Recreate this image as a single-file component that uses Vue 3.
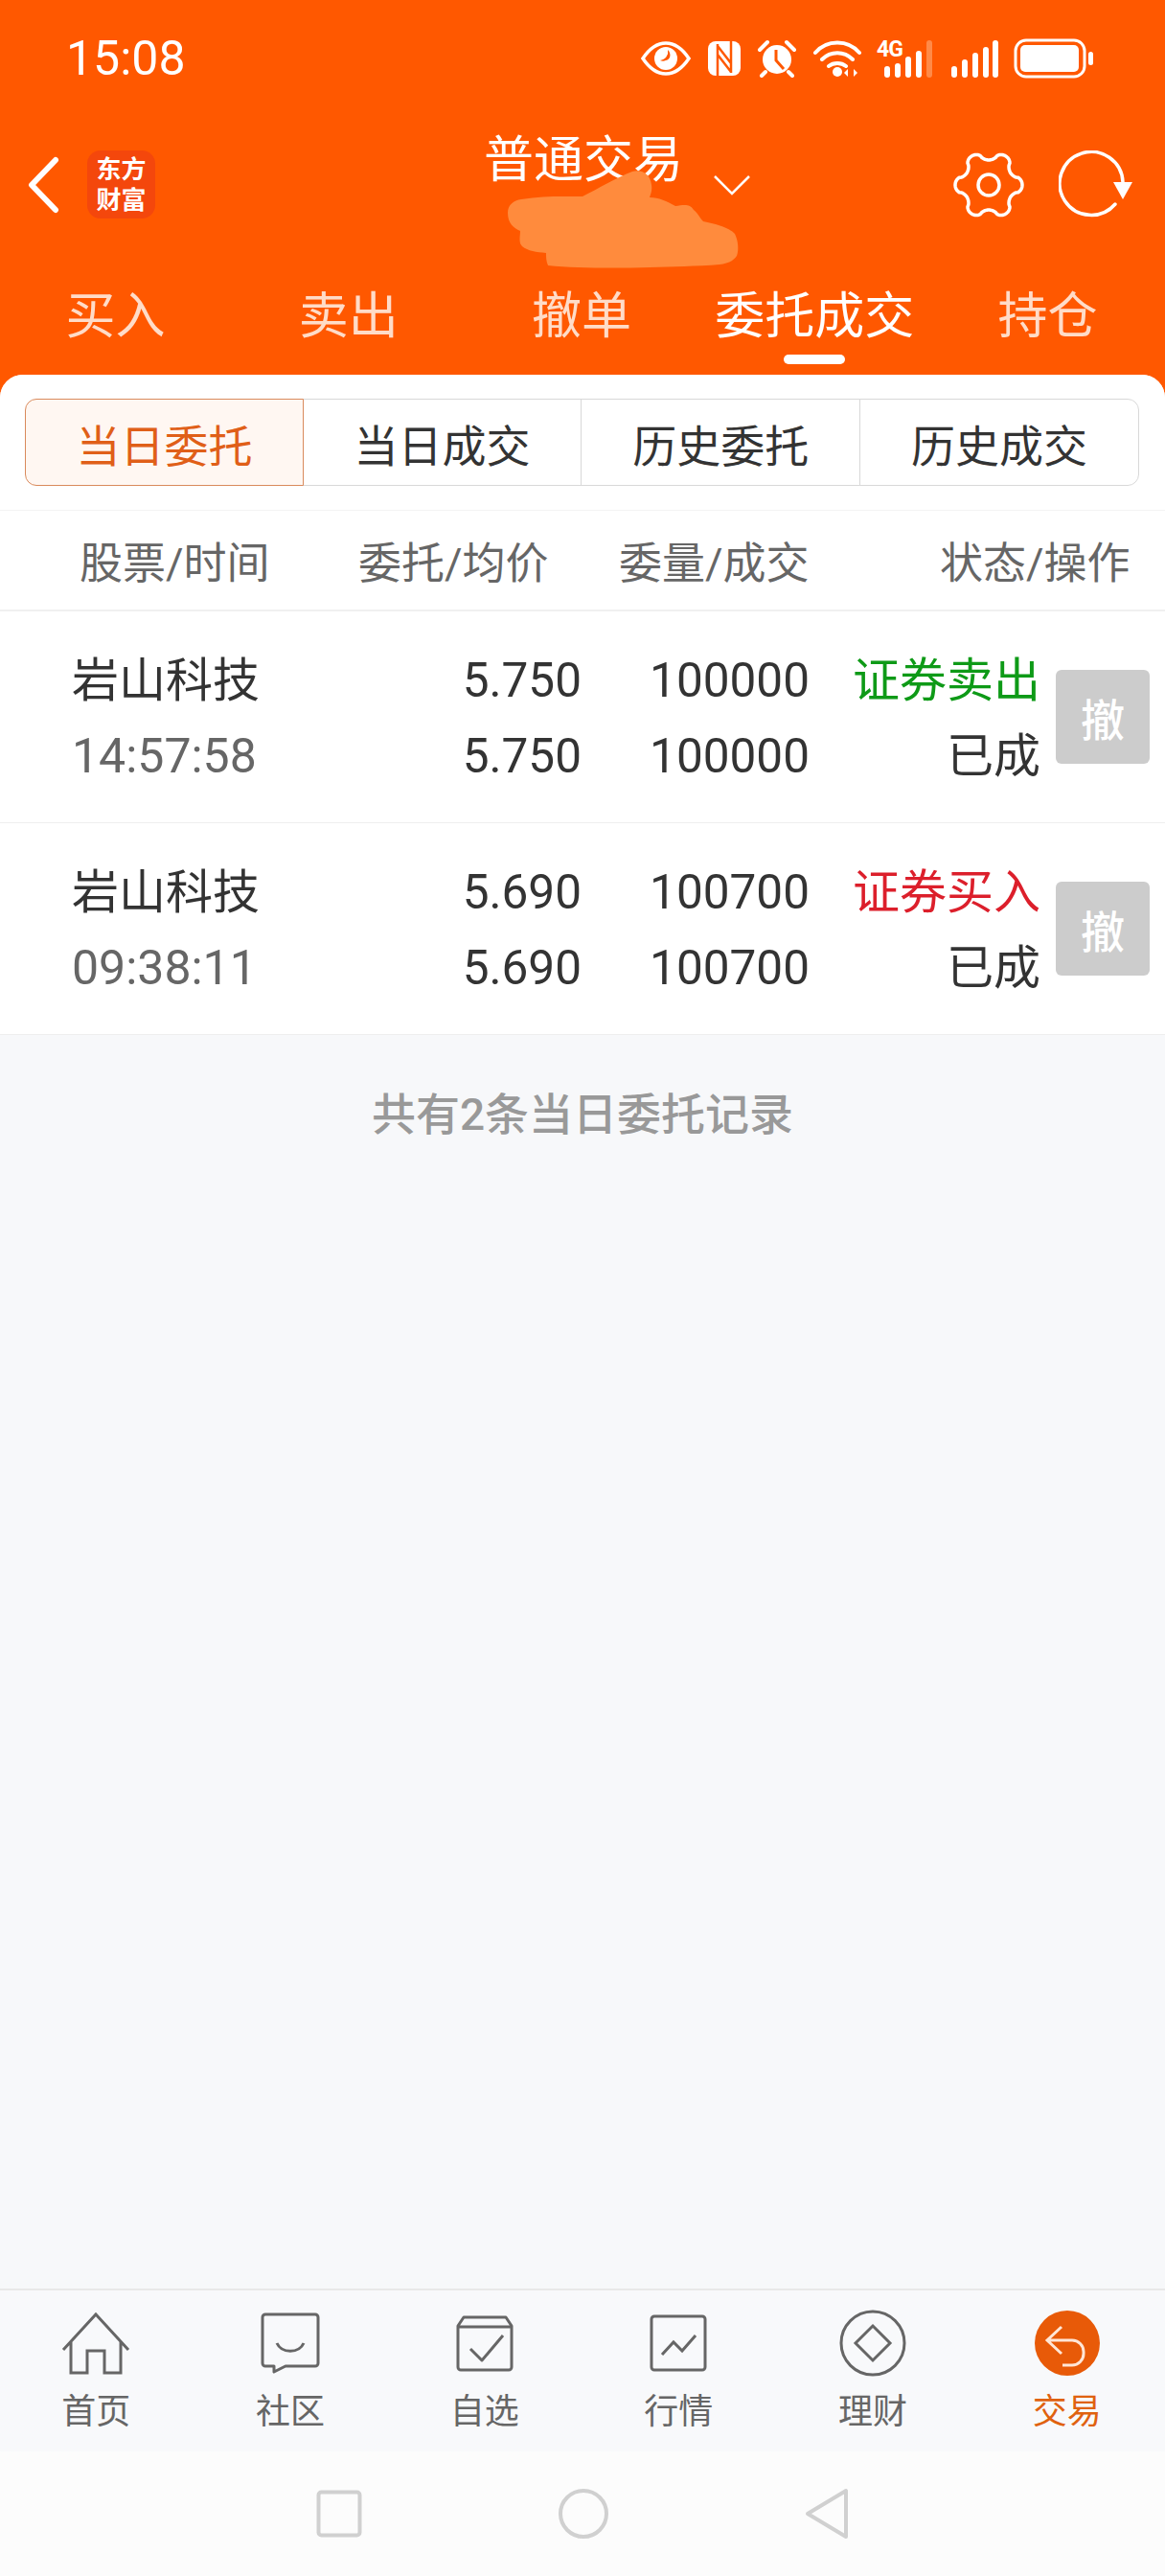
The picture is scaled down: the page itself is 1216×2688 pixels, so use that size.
<template>
  <div class="page">
    <header class="top">
      <div class="status">
        <span class="clock">15:08</span>
        <div class="status-icons">
          <svg width="52" height="36" viewBox="0 0 52 36">
            <path d="M2 18C10 6 18 2 26 2s16 4 24 16c-8 12-16 16-24 16S10 30 2 18z" fill="none" stroke="#fff" stroke-width="3.5" />
            <circle cx="26" cy="18" r="12" fill="#fff" />
            <path d="M28 9a9 9 0 0 1-8 11c2 1 4 1 6 0 5-1 6-7 2-11z" fill="#ff5800" />
          </svg>
          <svg width="36" height="38" viewBox="0 0 36 38">
            <rect x="1" y="1" width="34" height="36" rx="8" fill="#fff" />
            <path d="M11 4v34M25 0v34M11 6l14 18M11 15l14 18" stroke="#ff5800" stroke-width="2.5" fill="none" />
          </svg>
          <svg width="42" height="40" viewBox="0 0 42 40">
            <circle cx="21" cy="21" r="15" fill="#fff" />
            <path d="M20 11v11l8 9" stroke="#ff5800" stroke-width="3" fill="none" />
            <path d="M3 11l8-8M39 11l-8-8M9 34l-4 4M33 34l4 4" stroke="#fff" stroke-width="4" stroke-linecap="round" />
          </svg>
          <svg width="50" height="40" viewBox="0 0 50 40">
            <path d="M2 14C14 0 36 0 48 14M9 21c9-9 23-9 32 0M16 28c5-4 13-4 18 0" stroke="#fff" stroke-width="4" fill="none" stroke-linecap="round" />
            <circle cx="25" cy="34" r="5" fill="#fff" />
            <path d="M36 39v-8l-4 4zM42 31v8l4-4z" fill="#fff" />
          </svg>
          <div class="net">
            <span class="net-label">4G</span>
            <svg width="60" height="40" viewBox="0 0 60 40">
              <rect x="8" y="28" width="6" height="12" rx="3" fill="#fff" />
              <rect x="19" y="25" width="6" height="15" rx="3" fill="#fff" />
              <rect x="30" y="18" width="6" height="22" rx="3" fill="#fff" />
              <rect x="41" y="12" width="6" height="28" rx="3" fill="#fff" />
              <rect x="52" y="1" width="6" height="39" rx="3" fill="#ff8a48" />
            </svg>
          </div>
          <svg width="50" height="40" viewBox="0 0 50 40">
            <rect x="1" y="28" width="6" height="12" rx="3" fill="#fff" />
            <rect x="12" y="21" width="6" height="19" rx="3" fill="#fff" />
            <rect x="23" y="14" width="6" height="26" rx="3" fill="#fff" />
            <rect x="34" y="8" width="6" height="32" rx="3" fill="#fff" />
            <rect x="44" y="1" width="6" height="39" rx="3" fill="#fff" />
          </svg>
          <svg width="84" height="42" viewBox="0 0 84 42">
            <rect x="2" y="2" width="72" height="38" rx="11" fill="none" stroke="#fff" stroke-width="3" />
            <rect x="7" y="7" width="61" height="28" rx="5" fill="#fff" />
            <rect x="78" y="14" width="5" height="14" rx="2.5" fill="#fff" />
          </svg>
        </div>
      </div>

      <div class="toolbar">
        <svg class="back" width="34" height="60" viewBox="0 0 34 60">
          <path d="M30 4L5 30l25 26" fill="none" stroke="#fff" stroke-width="6" stroke-linecap="round" stroke-linejoin="round" />
        </svg>
        <div class="logo">东方<br />财富</div>
        <div class="title">普通交易</div>
        <svg class="caret" width="40" height="22" viewBox="0 0 40 22">
          <path d="M2 2l18 18L38 2" fill="none" stroke="#fff" stroke-width="2.5" />
        </svg>
        <svg class="gear" width="76" height="72" viewBox="0 0 76 72">
          <path :d="gearPath" fill="none" stroke="#fff" stroke-width="3.5" stroke-linejoin="round" />
          <circle cx="38" cy="36" r="11" fill="none" stroke="#fff" stroke-width="3.5" />
        </svg>
        <svg class="refresh" width="78" height="72" viewBox="0 0 78 72">
          <path d="M67 33A33 33 0 1 0 59 56" fill="none" stroke="#fff" stroke-width="3.5" stroke-linecap="round" />
          <path d="M57 33h20l-10 18z" fill="#fff" />
        </svg>
      </div>

      <nav class="tabs">
        <div v-for="t in tabs" :key="t" class="tab" :class="{ on: t === '委托成交' }">
          <span>{{ t }}</span>
          <i v-if="t === '委托成交'"></i>
        </div>
      </nav>

      <!-- hand-drawn smudge over the account name -->
      <svg class="smudge" width="260" height="115" viewBox="520 170 260 115">
        <path
          fill="#ff8b3d"
          d="M530 222c0-8 6-13 14-14 24-4 44-3 64-3 16-8 36-20 52-26 10-3 19 3 20 14 1 6-1 10-2 13 10 0 18 4 27 9 8-1 15-3 19 4 5 4 6 8 10 12 14 3 26 6 33 13 4 8 4 18 2 23-4 6-10 8-18 9-24 2-50 2-73 3-34 1-76 1-106-2-2-4-2-9-2-13-10-1-19-2-25-7-4-4-2-11-2-16-7-3-13-8-13-19z"
        />
      </svg>
    </header>

    <main class="panel">
      <div class="card">
        <div class="seg-wrap">
          <div class="seg">
            <div v-for="(s, i) in segments" :key="s" class="seg-item" :class="{ on: i === 0 }">{{ s }}</div>
          </div>
        </div>

        <div class="thead">
          <span class="h1">股票/时间</span>
          <span class="h2">委托/均价</span>
          <span class="h3">委量/成交</span>
          <span>状态/操作</span>
        </div>

        <div v-for="o in orders" :key="o.time" class="row">
          <div class="cell">
            <div>{{ o.name }}</div>
            <div class="time">{{ o.time }}</div>
          </div>
          <div class="cell num">
            <div>{{ o.price }}</div>
            <div>{{ o.avg }}</div>
          </div>
          <div class="cell num">
            <div>{{ o.qty }}</div>
            <div>{{ o.done }}</div>
          </div>
          <div class="cell state">
            <div :class="o.side">{{ o.type }}</div>
            <div>已成</div>
          </div>
          <button class="cancel">撤</button>
        </div>

        <div class="empty">共有2条当日委托记录</div>
      </div>
    </main>

    <footer class="bar">
      <div v-for="b in bar" :key="b.label" class="bar-item" :class="{ on: b.label === '交易' }">
        <div class="bar-icon">
          <svg v-if="b.label === '首页'" width="72" height="66" viewBox="0 0 72 66" fill="none" stroke="#666" stroke-width="3">
            <path d="M2 40L36 3l34 37M10 32v32h17V41h18v23h17V32" />
          </svg>
          <svg v-else-if="b.label === '社区'" width="62" height="64" viewBox="0 0 62 64" fill="none" stroke="#666" stroke-width="3" stroke-linejoin="round">
            <path d="M5 2h52a3 3 0 0 1 3 3v48a3 3 0 0 1-3 3H26l-12 6v-6H5a3 3 0 0 1-3-3V5a3 3 0 0 1 3-3z" />
            <path d="M17 32c5 11 23 11 28 0" />
          </svg>
          <svg v-else-if="b.label === '自选'" width="60" height="60" viewBox="0 0 60 60" fill="none" stroke="#666" stroke-width="3" stroke-linejoin="round">
            <path d="M2 12l6-9h44l6 9v43a3 3 0 0 1-3 3H5a3 3 0 0 1-3-3zM2 13h56" />
            <path d="M15 36l12 12 22-26" />
          </svg>
          <svg v-else-if="b.label === '行情'" width="60" height="60" viewBox="0 0 60 60" fill="none" stroke="#666" stroke-width="3">
            <rect x="2" y="2" width="56" height="56" rx="3" />
            <path d="M13 42l12-13 9 9 14-16" />
          </svg>
          <svg v-else-if="b.label === '理财'" width="70" height="70" viewBox="0 0 70 70" fill="none" stroke="#666" stroke-width="3">
            <circle cx="35" cy="35" r="33" />
            <path d="M35 17l18 18-18 18-18-18z" />
          </svg>
          <svg v-else width="70" height="70" viewBox="0 0 70 70" fill="none">
            <circle cx="35" cy="35" r="34" fill="#e85a08" />
            <path d="M29 18L14 32l15 14M14 32h26a12 12 0 0 1 12 12v2a12 12 0 0 1-12 12H30" stroke="#ffe6d6" stroke-width="3" />
          </svg>
        </div>
        <span>{{ b.label }}</span>
      </div>
    </footer>

    <div class="sysnav">
      <svg width="48" height="50" viewBox="0 0 48 50"><rect x="2.5" y="2.5" width="43" height="45" rx="3" fill="none" stroke="#d0d0d0" stroke-width="4" /></svg>
      <svg width="54" height="54" viewBox="0 0 54 54"><circle cx="27" cy="27" r="24" fill="none" stroke="#d0d0d0" stroke-width="4" /></svg>
      <svg width="46" height="54" viewBox="0 0 46 54"><path d="M3 27L43 3v48z" fill="none" stroke="#d0d0d0" stroke-width="4" stroke-linejoin="round" /></svg>
    </div>
  </div>
</template>

<script setup>
const tabs = ['买入', '卖出', '撤单', '委托成交', '持仓']
const segments = ['当日委托', '当日成交', '历史委托', '历史成交']

const orders = [
  { name: '岩山科技', time: '14:57:58', price: '5.750', avg: '5.750', qty: '100000', done: '100000', type: '证券卖出', side: 'sell' },
  { name: '岩山科技', time: '09:38:11', price: '5.690', avg: '5.690', qty: '100700', done: '100700', type: '证券买入', side: 'buy' }
]

const bar = [
  { label: '首页' },
  { label: '社区' },
  { label: '自选' },
  { label: '行情' },
  { label: '理财' },
  { label: '交易' }
]

// six-lobed outline for the settings gear
function makeGear() {
  const pts = []
  for (let i = 0; i < 180; i++) {
    const a = (i / 180) * Math.PI * 2
    const f = Math.cos(6 * a)
    const r = 30.5 + 4.5 * Math.sign(f) * Math.pow(Math.abs(f), 0.6)
    pts.push((38 + r * Math.cos(a)).toFixed(1) + ' ' + (36 + r * Math.sin(a)).toFixed(1))
  }
  return 'M' + pts.join('L') + 'z'
}

const gearPath = makeGear()
</script>

<style scoped>
.page {
  display: flex;
  flex-direction: column;
  height: 100vh;
  font-family: Roboto, "Noto Sans CJK SC", sans-serif;
  color: #333;
  background: #f7f8fa;
}

.top {
  position: relative;
  background: #ff5800;
  color: #fff;
}

.status {
  display: flex;
  align-items: center;
  justify-content: space-between;
  height: 122px;
  padding: 0 74px 0 69px;
}

.clock {
  font-size: 50px;
}

.status-icons {
  display: flex;
  align-items: center;
  gap: 16.5px;
}

.net {
  position: relative;
  width: 60px;
  height: 40px;
}

.net-label {
  position: absolute;
  left: 0;
  top: -1px;
  font-size: 23px;
  line-height: 23px;
  font-weight: 700;
  letter-spacing: -1px;
}

.net svg {
  display: block;
}

.toolbar {
  display: flex;
  align-items: flex-start;
  height: 130px;
  padding-left: 28px;
}

.back {
  margin-top: 41px;
}

.logo {
  width: 71px;
  height: 71px;
  margin: 35px 0 0 29px;
  background: #f4470c;
  border-radius: 14px;
  font-size: 26px;
  font-weight: 700;
  line-height: 32px;
  text-align: center;
  padding-top: 4px;
  box-sizing: border-box;
}

.title {
  margin: 21px 0 0 343px;
  font-size: 52px;
  line-height: 50px;
}

.caret {
  margin: 60px 0 0 31px;
}

.gear {
  margin: 35px 0 0 210px;
}

.refresh {
  margin: 35px 0 0 35px;
}

.tabs {
  display: grid;
  grid-template-columns: repeat(5, 1fr);
  height: 139px;
  box-sizing: border-box;
  padding-top: 54px;
}

.tab {
  display: flex;
  flex-direction: column;
  align-items: center;
  font-size: 52px;
  line-height: 50px;
  color: #ffdcc8;
  transform: translateX(-1px);
}

.tab.on {
  color: #fff;
}

.tab i {
  display: block;
  width: 64px;
  height: 10px;
  margin-top: 14px;
  border-radius: 5px;
  background: #fff;
}

.smudge {
  position: absolute;
  left: 520px;
  top: 170px;
}

.panel {
  flex: 1;
  display: flex;
  background: #ff5800;
}

.card {
  flex: 1;
  display: flex;
  flex-direction: column;
  border-radius: 24px 24px 0 0;
  background: #f7f8fa;
  overflow: hidden;
}

.seg-wrap {
  height: 142px;
  padding: 25px 27px 0 26px;
  box-sizing: border-box;
  background: #fff;
  border-bottom: 1px solid #f4f4f4;
}

.seg {
  display: grid;
  grid-template-columns: repeat(4, 1fr);
  height: 91px;
  box-sizing: border-box;
}

.seg-item {
  display: flex;
  align-items: center;
  justify-content: center;
  margin-left: -1.5px;
  border: 1.5px solid #d8d8d8;
  font-size: 46px;
  color: #333;
  background: #fff;
}

.seg-item:first-child {
  margin-left: 0;
  border-color: #d98a5c;
  border-radius: 12px 0 0 12px;
  color: #e05f18;
  background: #fff7f2;
  position: relative;
  z-index: 1;
}

.seg-item:last-child {
  border-radius: 0 12px 12px 0;
}

.thead {
  display: flex;
  align-items: center;
  height: 105px;
  padding-left: 83px;
  font-size: 45px;
  color: #666;
  background: #fff;
  border-bottom: 2px solid #f0f0f0;
  box-sizing: border-box;
}

.h1 {
  width: 291px;
}

.h2 {
  width: 272px;
}

.h3 {
  width: 335px;
}

.row {
  display: grid;
  grid-template-columns: 300px 232px 238px 241px 98px;
  align-items: center;
  height: 221px;
  padding-left: 75px;
  box-sizing: border-box;
  background: #fff;
  font-size: 49px;
  line-height: 79px;
  border-bottom: 1px solid #eee;
}

.row:last-of-type {
  border-bottom: none;
}

.cell {
  padding-top: 4px;
}

.time {
  color: #666;
  font-size: 50px;
}

.num {
  text-align: right;
  font-size: 49.5px;
}

.state {
  text-align: right;
}

.sell {
  color: #0e9a17;
}

.buy {
  color: #dc1f2b;
}

.cancel {
  width: 98px;
  height: 98px;
  margin-left: 16px;
  padding: 0;
  border: none;
  border-radius: 6px;
  background: #ccc;
  color: #fff;
  font-family: inherit;
  font-size: 46px;
  font-weight: 500;
}

.empty {
  margin-top: 53px;
  text-align: center;
  font-size: 46px;
  line-height: 60px;
  font-weight: 500;
  color: #999;
}

.bar {
  display: grid;
  grid-template-columns: repeat(6, 1fr);
  height: 170px;
  box-sizing: border-box;
  border-top: 2px solid #e8e8e8;
  background: #f8f9fb;
}

.bar-item {
  display: flex;
  flex-direction: column;
  align-items: center;
  font-size: 36px;
  line-height: 42px;
  color: #666;
  transform: translateX(-1px);
}

.bar-item.on {
  color: #e0620f;
}

.bar-icon {
  display: flex;
  align-items: center;
  justify-content: center;
  height: 70px;
  margin: 20px 0 16px;
}

.sysnav {
  display: flex;
  align-items: center;
  justify-content: center;
  gap: 204px;
  height: 130px;
  background: #fcfcfc;
}
</style>
